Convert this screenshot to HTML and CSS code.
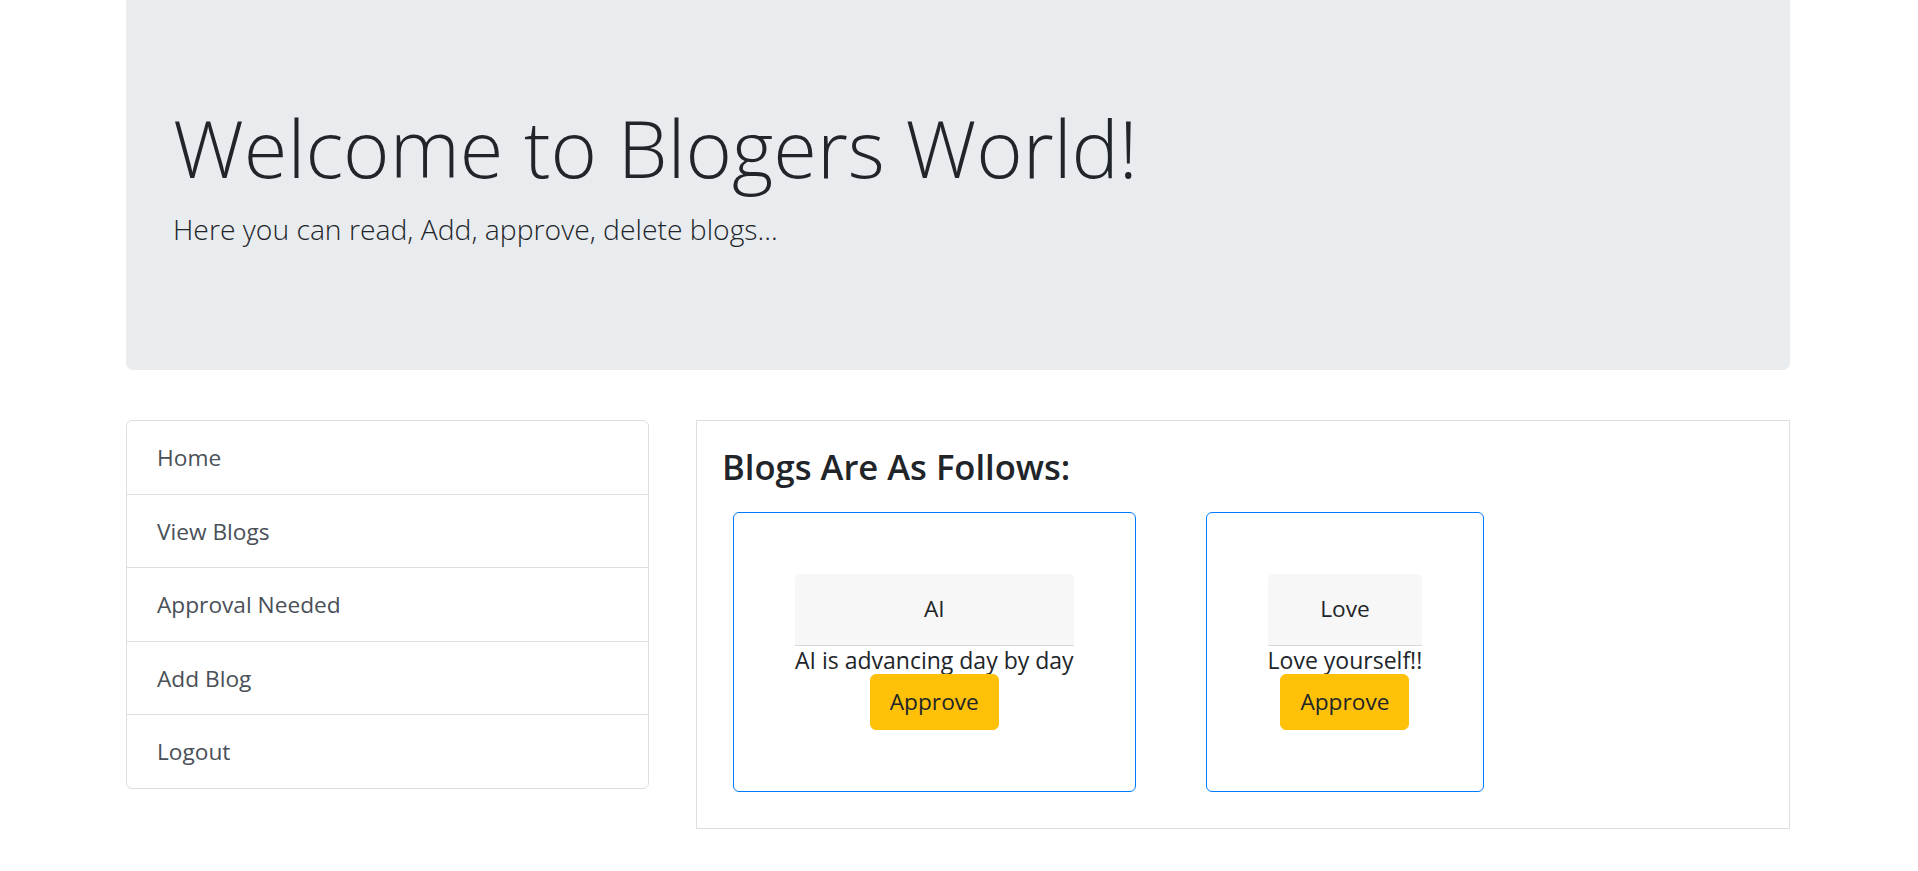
FILE: index.html
```html
<!DOCTYPE html>
<html lang="en">
<head>
<meta charset="utf-8">
<title>Blogers World</title>
<link rel="stylesheet" href="styles.css">
</head>
<body>
<div class="page">
  <header class="hero">
    <h1 class="hero-title">Welcome to Blogers World!</h1>
    <p class="hero-lead">Here you can read, Add, approve, delete blogs...</p>
  </header>
  <div class="layout">
    <nav class="menu">
      <a class="menu-item" href="#">Home</a>
      <a class="menu-item" href="#">View Blogs</a>
      <a class="menu-item" href="#">Approval Needed</a>
      <a class="menu-item" href="#">Add Blog</a>
      <a class="menu-item" href="#">Logout</a>
    </nav>
    <main class="panel">
      <h4 class="panel-title">Blogs Are As Follows:</h4>
      <div class="blog-list">
        <div class="blog-card">
          <div class="blog-inner">
            <div class="blog-head">AI</div>
            <div class="blog-text">AI is advancing day by day</div>
            <button class="btn-approve" type="button">Approve</button>
          </div>
        </div>
        <div class="blog-card">
          <div class="blog-inner">
            <div class="blog-head">Love</div>
            <div class="blog-text">Love yourself!!</div>
            <button class="btn-approve" type="button">Approve</button>
          </div>
        </div>
      </div>
    </main>
  </div>
</div>
</body>
</html>
```
FILE: styles.css
```css
* { box-sizing: border-box; }

body {
  margin: 0;
  font-family: "Open Sans", "Noto Sans", sans-serif;
  font-size: 22.7px;
  color: #212529;
  background: #fff;
}

.page {
  padding: 0 128px 0 126px;
}

.hero {
  background: #e9ecef;
  border-radius: 0 0 7px 7px;
  padding: 99px 47px 119px;
}

.hero-title {
  margin: 0 0 12px;
  font-size: 79.4px;
  font-weight: 300;
  line-height: 97px;
  color: #212529;
}

.hero-lead {
  margin: 0;
  font-size: 28.3px;
  font-weight: 300;
  line-height: 43px;
}

.layout {
  display: grid;
  grid-template-columns: 523px 1094px;
  column-gap: 47px;
  align-items: start;
  margin-top: 50px;
}

.menu {
  display: flex;
  flex-direction: column;
  border: 1px solid rgba(0, 0, 0, 0.125);
  border-radius: 6px;
  overflow: hidden;
}

.menu-item {
  display: block;
  padding: 20px 30px 18px;
  line-height: 34.6px;
  color: #495057;
  text-decoration: none;
}

.menu-item + .menu-item {
  border-top: 1px solid rgba(0, 0, 0, 0.125);
}

.panel {
  border: 1px solid rgba(0, 0, 0, 0.125);
  padding: 25px 27px 36px 25px;
}

.panel-title {
  margin: 0;
  font-size: 34.6px;
  font-weight: 600;
  line-height: 41.5px;
}

.blog-list {
  display: flex;
  align-items: flex-start;
  gap: 70px;
  margin-top: 24.5px;
  padding-left: 11px;
}

.blog-card {
  border: 1px solid #007bff;
  border-radius: 6px;
  padding: 61px;
}

.blog-inner {
  display: flex;
  flex-direction: column;
  align-items: center;
  text-align: center;
}

.blog-head {
  align-self: stretch;
  background: #f7f7f7;
  border-bottom: 1px solid rgba(0, 0, 0, 0.125);
  border-radius: 5px 5px 0 0;
  padding: 18.2px 0;
  line-height: 34.6px;
}

.blog-text {
  font-size: 23px;
  line-height: 28px;
  white-space: nowrap;
}

.btn-approve {
  font-family: inherit;
  font-size: 22.7px;
  line-height: 34.6px;
  color: #212529;
  background: #ffc107;
  border: 1px solid #ffc107;
  border-radius: 6px;
  padding: 9.7px 19px;
  cursor: pointer;
}
```
